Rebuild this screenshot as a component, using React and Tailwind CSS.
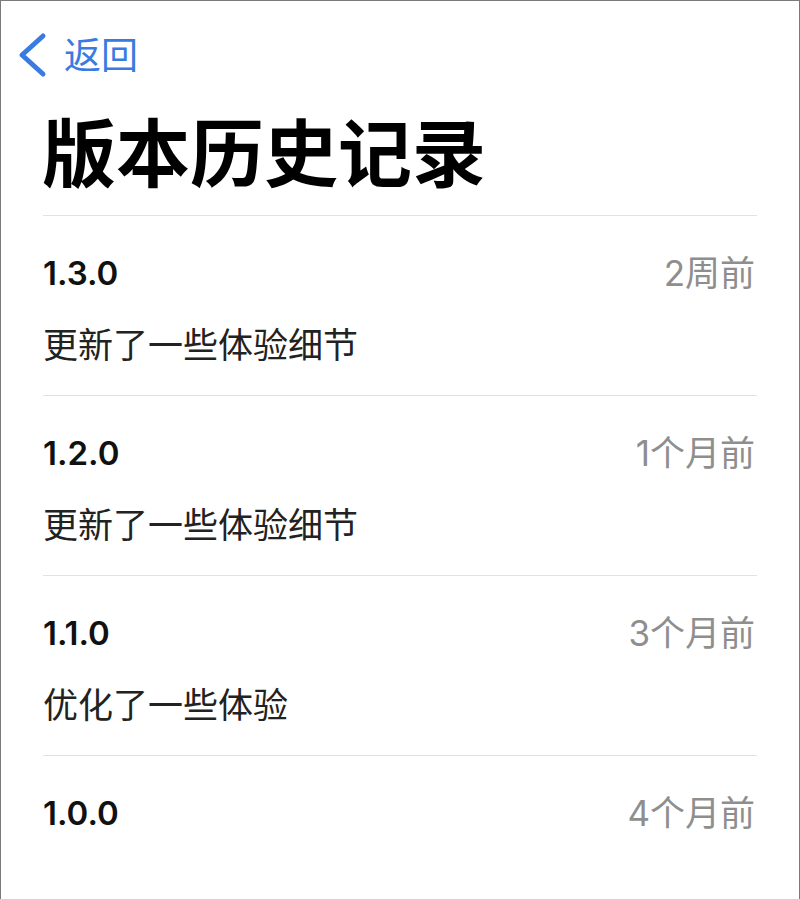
const VERSIONS = [
  { version: "1.3.0", time: "2周前", note: "更新了一些体验细节" },
  { version: "1.2.0", time: "1个月前", note: "更新了一些体验细节" },
  { version: "1.1.0", time: "3个月前", note: "优化了一些体验" },
  { version: "1.0.0", time: "4个月前", note: "" },
];

const FONT = { fontFamily: 'Inter, "Noto Sans CJK SC", sans-serif' };

function Chevron() {
  return (
    <svg width="30" height="46" viewBox="0 0 30 46" fill="none">
      <path d="M26 4 L5 23 L26 42" stroke="#3a7be0" strokeWidth="5" strokeLinecap="round" strokeLinejoin="round" />
    </svg>
  );
}

export default function App() {
  return (
    <div
      className="w-[800px] h-[899px] bg-white border-x border-t border-[#7a7a7a] overflow-hidden"
      style={FONT}
    >
      <div className="flex items-center pl-[16px] pt-[31px] h-[77px]">
        <Chevron />
        <span className="ml-[17px] text-[37px] leading-none text-[#3a7be0]">返回</span>
      </div>

      <div className="mx-[41px] mt-[39px]">
        <h1 className="text-[74px] leading-none font-bold text-black">版本历史记录</h1>
      </div>

      <div className="mx-[42px] mt-[24px]">
        {VERSIONS.map((v) => (
          <div key={v.version} className="border-t border-[#e2e2e2] h-[180px] pt-[37px]">
            <div className="flex items-center justify-between h-[40px]">
              <span className="text-[33px] font-semibold text-[#111] leading-none">{v.version}</span>
              <span className="text-[35px] text-[#8e8e8e] leading-none mr-[2px]">{v.time}</span>
            </div>
            {v.note && (
              <p className="mt-[32px] h-[40px] flex items-center text-[35px] leading-none text-[#222]">
                {v.note}
              </p>
            )}
          </div>
        ))}
      </div>
    </div>
  );
}
